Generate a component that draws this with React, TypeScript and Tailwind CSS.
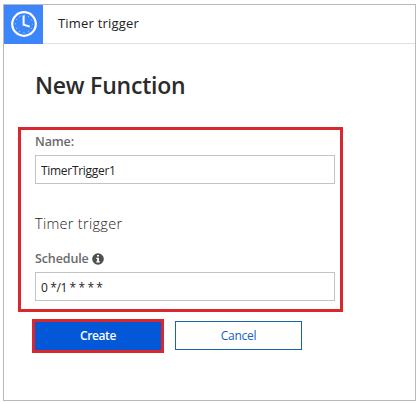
import type { ReactNode } from "react";

function ClockIcon() {
  return (
    <svg width="26" height="26" viewBox="0 0 26 26" fill="none" stroke="white">
      <circle cx="13" cy="13" r="11.8" strokeWidth="2.2" />
      <circle cx="13" cy="13" r="8.6" strokeWidth="1" strokeOpacity="0.75" strokeDasharray="1 3.503" strokeDashoffset="0.5" />
      <path d="M12.6 4.5V13.8L18.8 15.6" strokeWidth="2" />
    </svg>
  );
}

function InfoIcon() {
  return (
    <svg width="12" height="12" viewBox="0 0 12 12">
      <circle cx="6" cy="6" r="5.8" fill="#505050" />
      <path d="M5 1.9H7V3.6H5ZM4.3 4.7H7V8.3H7.8V9.6H4.3V8.3H5.1V6H4.3Z" fill="white" />
    </svg>
  );
}

function Field({ label, value, className, inputClassName }: { label: ReactNode; value: string; className: string; inputClassName: string }) {
  return (
    <div className={className}>
      <label className="flex h-4 items-center text-[12.5px] font-semibold tracking-[-0.12px] text-[#6a6a6a]">{label}</label>
      <input
        readOnly
        value={value}
        className={`mt-[5px] block h-[29px] w-[300px] border border-[#c3c3c3] bg-white px-[5px] pt-[2px] text-[12px] text-[#222] outline-none ${inputClassName}`}
      />
    </div>
  );
}

export default function App() {
  return (
    <main className="h-[404px] w-[418px] bg-white pt-1 pl-[3px] font-['Open_Sans','Noto_Sans',sans-serif]">
      <section className="h-[397px] w-[413px] border border-[#b9b9b9]">
        <header className="flex h-[39px] items-center border-b border-[#e0e0e0]">
          <div className="flex h-[39px] w-[39px] items-center justify-center bg-[#3c85fa]">
            <ClockIcon />
          </div>
          <span className="ml-[15px] text-[13px] tracking-[0.2px] text-[#222]">Timer trigger</span>
        </header>
        <h1 className="mt-[25px] ml-[31px] h-8 text-[23px] leading-8 font-semibold tracking-[-0.22px] text-[#2b2b2b]">New Function</h1>
        <div className="mt-[26px] ml-[14px] h-[185px] w-[325px] border-[3px] border-[#d9272e] pl-[14px]">
          <Field className="pt-1" label="Name:" value="TimerTrigger1" inputClassName="tracking-[-0.3px]" />
          <h2 className="mt-[30px] h-5 text-[14.5px] leading-5 font-light tracking-[0.3px] text-[#222]">Timer trigger</h2>
          <Field
            className="mt-[17px]"
            label={<><span>Schedule</span><span className="ml-[3px]"><InfoIcon /></span></>}
            value="0 */1 * * * *"
            inputClassName="tracking-[-0.4px]"
          />
        </div>
        <div className="mt-[7px] ml-7 flex items-start">
          <button className="h-[34px] w-[132px] border-[3px] border-[#d9272e] bg-[#0358d8] text-[12px] font-semibold tracking-[-0.4px] text-white">Create</button>
          <button className="mt-[2px] ml-[11px] h-[29px] w-[127px] border border-[#1764b0] bg-white text-[12px] tracking-[-0.3px] text-[#1262c8]">Cancel</button>
        </div>
      </section>
    </main>
  );
}
